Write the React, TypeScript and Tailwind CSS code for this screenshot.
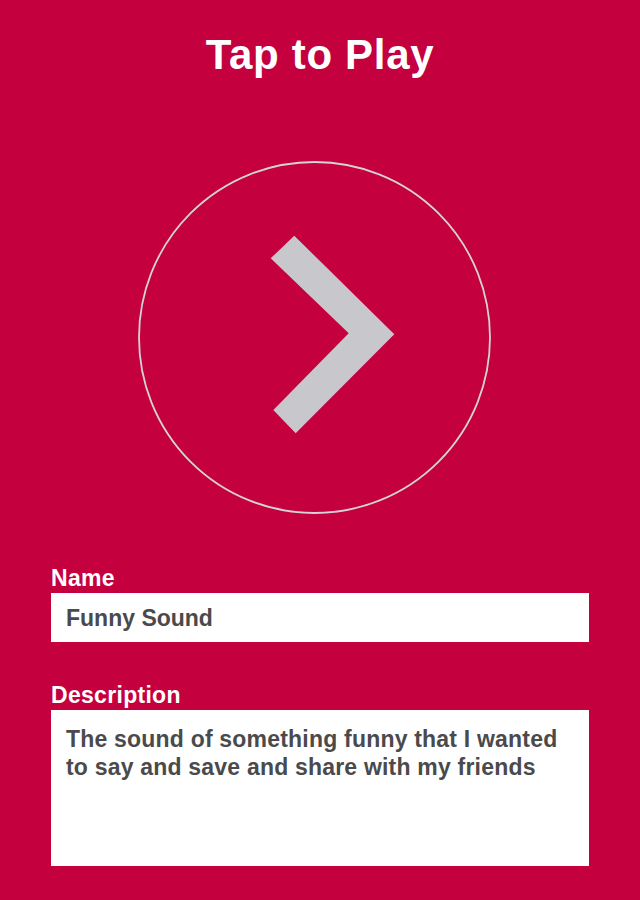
import React from 'react';

const PlayButton = () => (
  <svg width="354" height="354" viewBox="0 0 354 354" className="block">
    <circle cx="176.5" cy="176.5" r="175.5" fill="none" stroke="#d6d3d8" strokeWidth="1.8" />
    <polygon
      points="132.7,97.3 156.3,74.7 256.3,173.3 157.7,272.3 135.3,249 210.7,172.3"
      fill="#c8c8cc"
    />
  </svg>
);

const App = () => {
  return (
    <div className="min-h-[900px] w-[640px] bg-[#c4003e] font-['Liberation_Sans',Arial,sans-serif] flex flex-col">
      {/* header */}
      <h1 className="pt-[34px] text-center text-[42px] leading-[42px] font-bold tracking-[0.7px] text-white">
        Tap to Play
      </h1>

      {/* play circle */}
      <div className="mt-[85px] ml-[138px]">
        <PlayButton />
      </div>

      {/* form */}
      <div className="mt-[52px] px-[51px] flex flex-col">
        <label className="text-[23px] leading-[22px] font-bold tracking-[0.3px] text-white">Name</label>
        <div className="mt-[4px] h-[49px] bg-white px-[15px] text-[23px] leading-[50px] font-bold text-[#4a4a4d]">
          Funny Sound
        </div>

        <label className="mt-[42px] text-[23px] leading-[22px] font-bold tracking-[0.3px] text-white">Description</label>
        <div className="mt-[4px] h-[156px] bg-white px-[15px] pt-[15px] text-[23px] leading-[28px] font-bold tracking-[0.2px] text-[#4a4a4d]">
          The sound of something funny that I wanted
          <br />
          to say and save and share with my friends
        </div>
      </div>
    </div>
  );
};

export default App;
